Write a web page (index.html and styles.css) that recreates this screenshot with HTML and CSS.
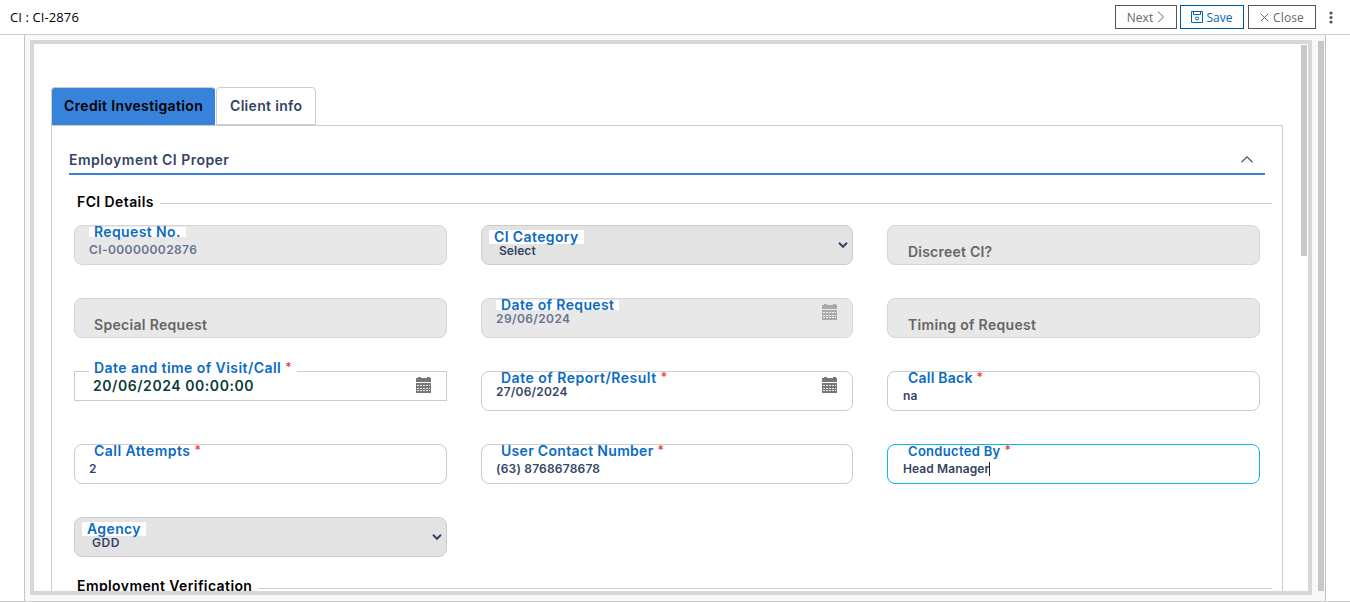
FILE: index.html
```
<!DOCTYPE html>
<html lang="en">
<head>
<meta charset="utf-8">
<title>CI : CI-2876</title>
<link rel="stylesheet" href="styles.css">
</head>
<body>
<svg class="defs" width="0" height="0" aria-hidden="true">
  <symbol id="calendar" viewBox="0 0 16 16">
    <path fill="currentColor" d="M2 0h3v1h6V0h3v1h1v4H0V1h2zM0 6h15v10H0z"/>
    <path stroke="#fff" stroke-opacity=".85" stroke-dasharray="2 1" d="M1 8.5h13M1 11.5h13M1 13.5h13"/>
  </symbol>
  <symbol id="chevron" viewBox="0 0 10 6">
    <path d="M1 .8l4 4 4-4" fill="none" stroke="currentColor" stroke-width="2"/>
  </symbol>
</svg>
<header class="topbar">
  <h1 class="title">CI : CI-2876</h1>
  <button class="btn next">Next
    <svg width="8" height="12" viewBox="0 0 8 12"><path d="M1 .7L6.5 6 1 11.3" fill="none" stroke="currentColor"/></svg>
  </button>
  <button class="btn save">
    <svg width="12" height="12" viewBox="0 0 12 12" fill="none" stroke="currentColor"><path d="M.5 .5h11v11H.5zM2.5 .5v3h7v-3"/><circle cx="6" cy="7.5" r="1.5"/></svg>
    Save</button>
  <button class="btn close">
    <svg width="9" height="9" viewBox="0 0 9 9"><path d="M.7 .7l7.6 7.6M8.3 .7L.7 8.3" stroke="currentColor"/></svg>
    Close</button>
  <svg class="more" width="4" height="13" viewBox="0 0 4 13" fill="#555"><circle cx="2" cy="2" r="1.6"/><circle cx="2" cy="6.5" r="1.6"/><circle cx="2" cy="11" r="1.6"/></svg>
</header>
<main class="stage">
  <section class="frame">
    <nav class="tabs">
      <a class="tab active"><span class="t-credit">Credit Investigation</span></a>
      <a class="tab"><span class="t-client">Client info</span></a>
    </nav>
    <div class="panel">
      <div class="panel-head">
        <h2 class="t-proper">Employment CI Proper</h2>
        <svg width="12" height="7" viewBox="0 0 12 7"><path d="M.5 6.3L6 .9l5.5 5.4" fill="none" stroke="#44546f" stroke-width="1.2"/></svg>
      </div>
      <h3 class="legend"><span>FCI Details</span></h3>
      <div class="grid">
        <div class="field disabled request"><label>Request No.</label><span class="value">CI-00000002876</span></div>
        <div class="field select category"><label>CI Category</label><span class="value">Select</span><svg class="arrow"><use href="#chevron"/></svg></div>
        <div class="field disabled empty third discreet"><label>Discreet CI?</label></div>
        <div class="field disabled empty special"><label>Special Request</label></div>
        <div class="field disabled date reqdate"><label>Date of Request</label><span class="value">29/06/2024</span><svg class="cal"><use href="#calendar"/></svg></div>
        <div class="field disabled empty third timing"><label>Timing of Request</label></div>
        <div class="field square visit"><label>Date and time of Visit/Call<i>*</i></label><span class="value">20/06/2024 00:00:00</span><svg class="cal"><use href="#calendar"/></svg></div>
        <div class="field date report"><label>Date of Report/Result<i>*</i></label><span class="value">27/06/2024</span><svg class="cal"><use href="#calendar"/></svg></div>
        <div class="field third callback"><label>Call Back<i>*</i></label><span class="value">na</span></div>
        <div class="field attempts"><label>Call Attempts<i>*</i></label><span class="value">2</span></div>
        <div class="field contact"><label>User Contact Number<i>*</i></label><span class="value">(63) 8768678678</span></div>
        <div class="field third focused conducted"><label>Conducted By<i>*</i></label><span class="value">Head Manager</span></div>
        <div class="field select agency"><label>Agency</label><span class="value">GDD</span><svg class="arrow"><use href="#chevron"/></svg></div>
      </div>
      <h3 class="legend"><span>Employment Verification</span></h3>
    </div>
    <div class="thumb"></div>
  </section>
  <div class="outer-thumb"></div>
</main>
</body>
</html>
```
FILE: styles.css
```
* { box-sizing: border-box; }
body {
  margin: 0;
  height: 602px;
  overflow: hidden;
  background: #fff;
  border-bottom: 1px solid #ccc;
  font-family: Inter, "Open Sans", sans-serif;
  font-size: 14px;
  font-weight: 600;
  line-height: 16px;
  color: #344563;
}
h1, h2, h3 { margin: 0; font: inherit; }
.defs { position: absolute; }

/* Top bar */
.topbar {
  display: flex;
  align-items: center;
  height: 35px;
  padding: 0 16px 0 10px;
  border-bottom: 1px solid #ccc;
  font-family: "Open Sans", sans-serif;
  font-weight: 400;
}
.title { flex: 1; font-size: 13px; color: #000; letter-spacing: .1px; }
.btn {
  display: flex;
  align-items: center;
  justify-content: center;
  gap: 4px;
  height: 24px;
  padding: 2px 0 0;
  background: #fff;
  border: 1px solid #555;
  color: #666;
  font: 12px/16px "Open Sans", sans-serif;
}
.btn svg { position: relative; top: -1px; }
.next { width: 62px; margin-right: 3px; }
.save { width: 64px; margin-right: 4px; padding-right: 1px; border-color: #00569c; color: #0067b8; }
.close { width: 68px; margin-right: 13px; letter-spacing: .1px; }
.more { margin-right: 1px; }

/* Framed, scrolling work area */
.stage {
  display: flex;
  justify-content: space-between;
  height: 566px;
  margin: 0 24px;
  padding: 5px 1px 6px 5px;
  border: solid #c4c4c4;
  border-width: 0 1px;
  background: #f7f8fa;
}
.frame {
  position: relative;
  width: 1282px;
  height: 555px;
  padding: 43px 25px 0 17px;
  overflow: hidden;
  border: 4px solid #d7d7d7;
  background: #fff;
}
.outer-thumb { width: 6px; height: 550px; margin-top: 1px; background: #c8c8c8; }
.thumb { position: absolute; top: 1px; right: 1px; width: 6px; height: 211px; background: #c8c8c8; }

/* Tabs */
.tabs { display: flex; gap: 1px; height: 38px; }
.tab {
  width: 100px;
  padding: 10px 0 0 13px;
  border: 1px solid #ccc;
  border-radius: 4px 4px 0 0;
  white-space: nowrap;
}
.tab.active {
  width: 164px;
  padding-left: 12px;
  border-right-color: #3783db;
  border-bottom: 0;
  background: #3783db;
  color: #000;
}
.t-credit { letter-spacing: .36px; }
.t-client { letter-spacing: .32px; }
.t-proper { letter-spacing: .47px; }

.panel { width: 1232px; height: 600px; padding: 0 10px 0 17px; border: 1px solid #ccc; }
.panel-head {
  display: flex;
  justify-content: space-between;
  width: 1196px;
  height: 49px;
  padding: 26px 12px 0 0;
  border-bottom: 2px solid #3783db;
}
.panel-head svg { margin-top: 4px; }
.legend {
  display: flex;
  align-items: center;
  gap: 6px;
  height: 16px;
  margin: 19px 0 0 8px;
  color: #000;
  letter-spacing: .4px;
}
.legend::after { content: ""; flex: 1; height: 1px; margin-top: 3px; background: #ccc; }

/* Form fields */
.grid {
  display: grid;
  grid-template-columns: 373px 372px 373px;
  grid-auto-rows: 40px;
  gap: 33px 34px;
  margin: 15px 0 0 5px;
}
.grid + .legend { margin-top: 21px; }
.grid + .legend::after { margin-top: 5px; }
.field {
  position: relative;
  border: 1px solid #ccc;
  border-radius: 8px;
  white-space: nowrap;
}
.field label {
  position: absolute;
  top: -2px;
  left: 19px;
  color: #0b6bc2;
  letter-spacing: .38px;
}
.field label i {
  position: relative;
  top: -2px;
  margin-left: 4px;
  color: #f44336;
  font-style: normal;
  font-size: 12px;
  letter-spacing: 0;
}
.value {
  position: absolute;
  top: 17px;
  left: 14px;
  font-size: 12px;
  line-height: 14px;
  letter-spacing: .2px;
}
.third label { left: 20px; }
.disabled { background: #e8e8e8; border-color: #d5d5d5; }
.disabled .value { color: #66758d; letter-spacing: .4px; }
.empty label { top: 18px; color: #666; letter-spacing: .31px; }
.date .value { top: 13px; }
.select { background: #e3e3e3; }
.select label {
  top: 4px;
  left: 7px;
  height: 14px;
  padding: 0 5px;
  background: #fff;
  line-height: 14px;
}
.select .value { top: 18px; left: 17px; letter-spacing: .05px; }
.agency .value { letter-spacing: .6px; }
.request label, .reqdate label {
  top: 1px;
  left: 14px;
  height: 10px;
  padding: 0 5px;
  background: #fff;
  line-height: 10px;
}
.square { height: 30px; border-radius: 0; }
.square label { top: -12px; left: 14px; padding: 0 5px; background: #fff; letter-spacing: .44px; }
.square .value {
  top: 6px;
  left: 18px;
  font-size: 14px;
  line-height: 16px;
  letter-spacing: .56px;
  color: #0a3d33;
}
.report label { letter-spacing: .5px; }
.attempts label { letter-spacing: .46px; }
.contact label { letter-spacing: .3px; }
.callback label, .discreet label { letter-spacing: .22px; }
.conducted label { font-size: 13px; letter-spacing: .3px; }
.focused { border-color: #0bb5f0; }
.focused .value { border-right: 1px solid #222; }
.third .value { left: 15px; letter-spacing: .1px; }
.cal { position: absolute; top: 5px; left: 340px; width: 16px; height: 16px; color: #777; }
.square .cal { left: 341px; }
.disabled .cal { color: #aaa; }
.arrow { position: absolute; top: 16px; left: 356px; width: 10px; height: 6px; }
.agency .arrow { left: 357px; }
```
